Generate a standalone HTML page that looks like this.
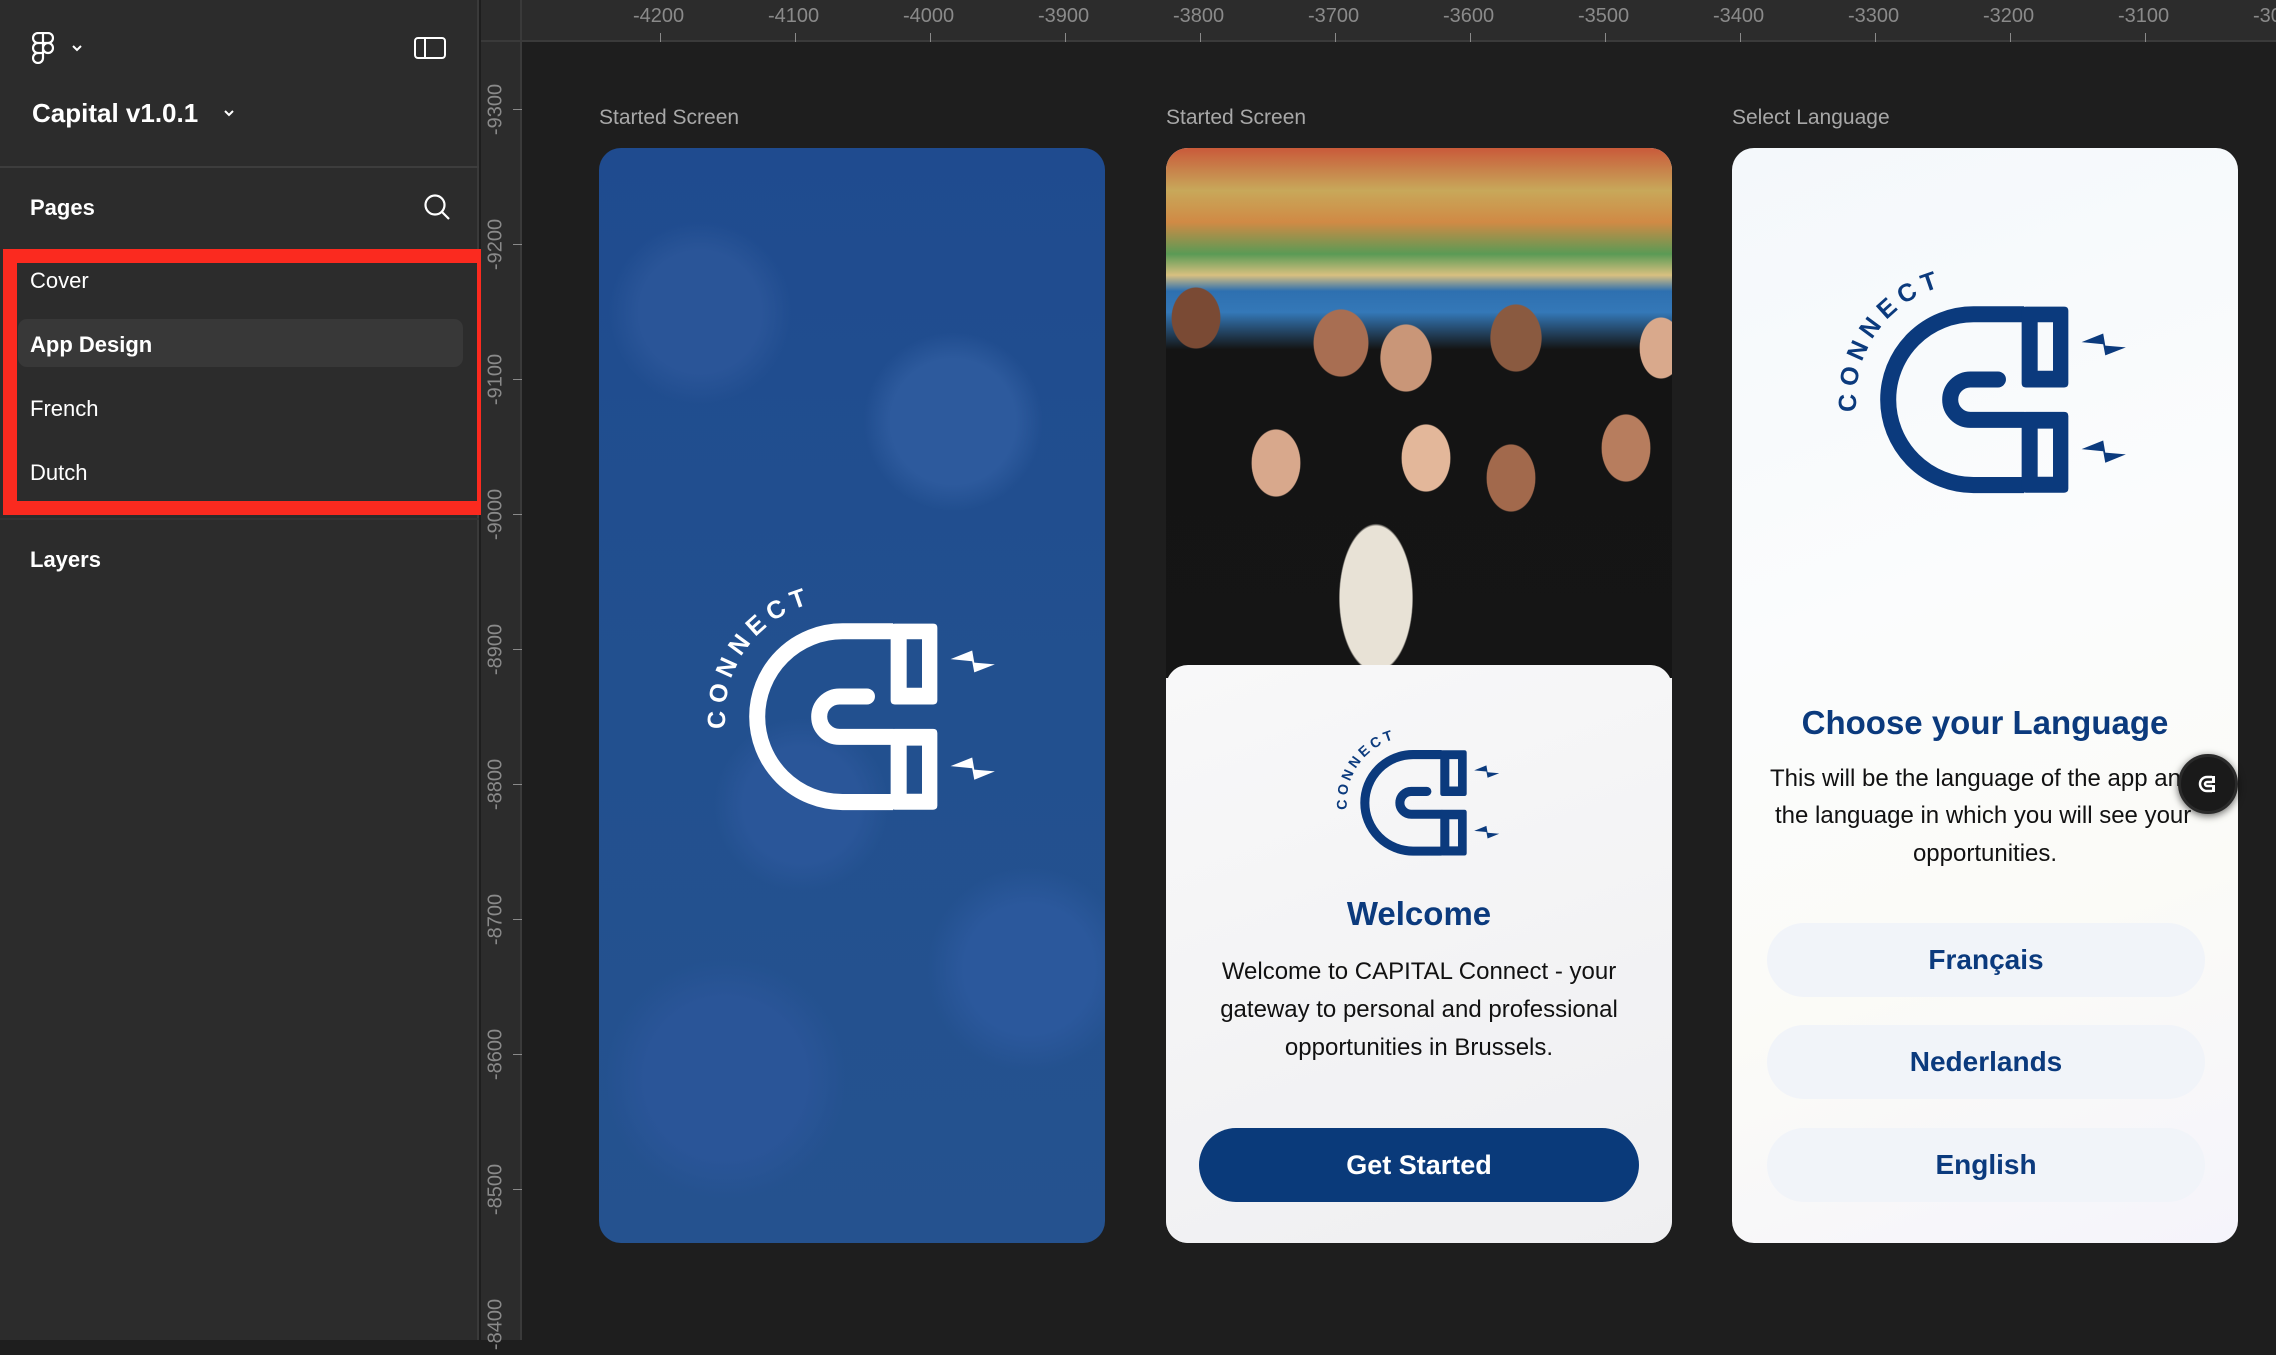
<!DOCTYPE html>
<html><head><meta charset="utf-8"><style>
*{margin:0;padding:0;box-sizing:border-box}
body{width:2276px;height:1340px;background:#1e1e1e;position:relative;overflow:hidden;font-family:"Liberation Sans",sans-serif}
.abs{position:absolute}
#side{left:0;top:0;width:479px;height:1340px;background:#2c2c2c;border-right:2px solid #3a3a3a}
.st{position:absolute;color:#fff;font-size:22px}
#topr{left:481px;top:0;right:0;height:42px;background:#2c2c2c;border-bottom:2px solid #3a3a3a}
#leftr{left:481px;top:42px;width:41px;height:1298px;background:#2c2c2c;border-right:2px solid #3a3a3a}
.rl{position:absolute;color:#8a8a8a;font-size:20px}
.tk{position:absolute;background:#8a8a8a}
.lab{position:absolute;top:106px;color:#a8a8a8;font-size:21px}
.card{position:absolute;top:148px;width:506px;height:1095px;border-radius:22px;overflow:hidden}
.nar{font-family:"Liberation Sans Narrow","Liberation Sans",sans-serif}
.btn{position:absolute;left:35px;width:438px;height:74px;border-radius:37px;background:#f1f4f9;color:#0b3a7d;font-weight:bold;font-size:28px;text-align:center;line-height:74px}
</style></head><body>
<div id="side" class="abs">
  <svg class="abs" style="left:32px;top:32px" width="22" height="32" viewBox="0 0 22 32" fill="none" stroke="#fff" stroke-width="2.2"><path d="M11 1H6a5 5 0 0 0 0 10h5zM11 1h5a5 5 0 0 1 0 10h-5zM11 11H6a5 5 0 0 0 0 10h5zM11 21H6a5 5 0 1 0 5 5zM16 11a5 5 0 1 1 0 10a5 5 0 1 1 0-10z"/></svg>
  <svg class="abs" style="left:71px;top:44px" width="12" height="8" viewBox="0 0 12 8"><path d="M2 2l4 4 4-4" stroke="#fff" stroke-width="2" fill="none"/></svg>
  <svg class="abs" style="left:414px;top:37px" width="32" height="22" viewBox="0 0 32 22"><rect x="1" y="1" width="30" height="20" rx="3" fill="none" stroke="#fff" stroke-width="2"/><line x1="11" y1="1" x2="11" y2="21" stroke="#fff" stroke-width="2"/></svg>
  <div class="st" style="left:32px;top:98px;font-size:26px;font-weight:600">Capital v1.0.1</div>
  <svg class="abs" style="left:223px;top:109px" width="12" height="8" viewBox="0 0 12 8"><path d="M2 2l4 4 4-4" stroke="#fff" stroke-width="2" fill="none"/></svg>
  <div class="abs" style="left:0;top:166px;width:479px;height:2px;background:#3d3d3d"></div>
  <div class="st" style="left:30px;top:195px;font-weight:bold">Pages</div>
  <svg class="abs" style="left:423px;top:193px" width="28" height="28" viewBox="0 0 28 28"><circle cx="12" cy="12" r="9.5" fill="none" stroke="#fff" stroke-width="2.2"/><path d="M19 19l7 7" stroke="#fff" stroke-width="2.2"/></svg>
  <div class="abs" style="left:18px;top:319px;width:445px;height:48px;background:#383838;border-radius:9px"></div>
  <div class="st" style="left:30px;top:268px">Cover</div>
  <div class="st" style="left:30px;top:332px;font-weight:bold">App Design</div>
  <div class="st" style="left:30px;top:396px">French</div>
  <div class="st" style="left:30px;top:460px">Dutch</div>
  <div class="abs" style="left:0;top:518px;width:479px;height:2px;background:#333"></div>
  <div class="st" style="left:30px;top:547px;font-weight:bold">Layers</div>
  <div class="abs" style="left:3px;top:249px;width:488px;height:266px;border:14px solid #fb2a1f"></div>
</div>
<div id="topr" class="abs"></div>
<div id="leftr" class="abs"></div>
<div class="abs" style="left:481px;top:0;width:41px;height:42px;border-right:2px solid #3a3a3a"></div>
<div class="rl" style="left:633px;top:5px">-4200</div><div class="tk" style="left:660px;top:33px;width:1px;height:9px"></div>
<div class="rl" style="left:768px;top:5px">-4100</div><div class="tk" style="left:795px;top:33px;width:1px;height:9px"></div>
<div class="rl" style="left:903px;top:5px">-4000</div><div class="tk" style="left:930px;top:33px;width:1px;height:9px"></div>
<div class="rl" style="left:1038px;top:5px">-3900</div><div class="tk" style="left:1065px;top:33px;width:1px;height:9px"></div>
<div class="rl" style="left:1173px;top:5px">-3800</div><div class="tk" style="left:1200px;top:33px;width:1px;height:9px"></div>
<div class="rl" style="left:1308px;top:5px">-3700</div><div class="tk" style="left:1335px;top:33px;width:1px;height:9px"></div>
<div class="rl" style="left:1443px;top:5px">-3600</div><div class="tk" style="left:1470px;top:33px;width:1px;height:9px"></div>
<div class="rl" style="left:1578px;top:5px">-3500</div><div class="tk" style="left:1605px;top:33px;width:1px;height:9px"></div>
<div class="rl" style="left:1713px;top:5px">-3400</div><div class="tk" style="left:1740px;top:33px;width:1px;height:9px"></div>
<div class="rl" style="left:1848px;top:5px">-3300</div><div class="tk" style="left:1875px;top:33px;width:1px;height:9px"></div>
<div class="rl" style="left:1983px;top:5px">-3200</div><div class="tk" style="left:2010px;top:33px;width:1px;height:9px"></div>
<div class="rl" style="left:2118px;top:5px">-3100</div><div class="tk" style="left:2145px;top:33px;width:1px;height:9px"></div>
<div class="rl" style="left:2253px;top:5px">-3000</div>
<div class="rl" style="left:466px;top:98px;width:60px;text-align:center;transform:rotate(-90deg)">-9300</div><div class="tk" style="left:513px;top:109px;width:9px;height:1px"></div>
<div class="rl" style="left:466px;top:233px;width:60px;text-align:center;transform:rotate(-90deg)">-9200</div><div class="tk" style="left:513px;top:244px;width:9px;height:1px"></div>
<div class="rl" style="left:466px;top:368px;width:60px;text-align:center;transform:rotate(-90deg)">-9100</div><div class="tk" style="left:513px;top:379px;width:9px;height:1px"></div>
<div class="rl" style="left:466px;top:503px;width:60px;text-align:center;transform:rotate(-90deg)">-9000</div><div class="tk" style="left:513px;top:514px;width:9px;height:1px"></div>
<div class="rl" style="left:466px;top:638px;width:60px;text-align:center;transform:rotate(-90deg)">-8900</div><div class="tk" style="left:513px;top:649px;width:9px;height:1px"></div>
<div class="rl" style="left:466px;top:773px;width:60px;text-align:center;transform:rotate(-90deg)">-8800</div><div class="tk" style="left:513px;top:784px;width:9px;height:1px"></div>
<div class="rl" style="left:466px;top:908px;width:60px;text-align:center;transform:rotate(-90deg)">-8700</div><div class="tk" style="left:513px;top:919px;width:9px;height:1px"></div>
<div class="rl" style="left:466px;top:1043px;width:60px;text-align:center;transform:rotate(-90deg)">-8600</div><div class="tk" style="left:513px;top:1054px;width:9px;height:1px"></div>
<div class="rl" style="left:466px;top:1178px;width:60px;text-align:center;transform:rotate(-90deg)">-8500</div><div class="tk" style="left:513px;top:1189px;width:9px;height:1px"></div>
<div class="rl" style="left:466px;top:1313px;width:60px;text-align:center;transform:rotate(-90deg)">-8400</div>

<div class="lab" style="left:599px">Started Screen</div>
<div class="lab" style="left:1166px">Started Screen</div>
<div class="lab" style="left:1732px">Select Language</div>

<div class="card" style="left:599px;background:radial-gradient(circle at 20% 15%,#2a5598 0 6%,transparent 9%),radial-gradient(circle at 70% 25%,#2d5a9d 0 7%,transparent 10%),radial-gradient(circle at 40% 60%,#2a5699 0 8%,transparent 12%),radial-gradient(circle at 85% 75%,#2b589c 0 7%,transparent 11%),radial-gradient(circle at 25% 85%,#2a5598 0 8%,transparent 12%),linear-gradient(#1f4b8f,#22508f 50%,#25528f)">
  <svg class="abs" style="left:104px;top:431px" width="300" height="237" viewBox="300 100 860 680">
    <g fill="#fff" stroke="#fff">
    <path d="M845 250H700A245 245 0 0 0 700 740H845" stroke-width="46" fill="none"/>
    <path d="M770 437H691A58 58 0 0 0 691 553H845" stroke-width="46" fill="none" stroke-linecap="round"/>
    <path stroke="none" fill-rule="evenodd" d="M850 228H960Q972 228 972 240V448Q972 460 960 460H850Q838 460 838 448V240Q838 228 850 228ZM884 273H928V412H884Z"/>
    <path stroke="none" fill-rule="evenodd" d="M850 530H960Q972 530 972 542V750Q972 762 960 762H850Q838 762 838 750V542Q838 530 850 530ZM884 578H928V716H884Z"/>
    <polygon stroke="none" points="1010,330 1072,305 1078,340 1137,345 1078,368 1072,336"/>
    <polygon stroke="none" points="1010,637 1072,612 1078,647 1137,652 1078,676 1072,643"/>
    </g>
    <path id="a1" d="M365 530A335 335 0 0 1 730 160" fill="none"/>
    <text font-family="Liberation Sans" font-weight="bold" font-size="72" fill="#fff" letter-spacing="18"><textPath href="#a1">CONNECT</textPath></text>
  </svg>
</div>

<div class="card" style="left:1166px;background:#f2f2f3">
  <div class="abs" style="left:0;top:0;width:506px;height:530px;background:
   radial-gradient(ellipse 40px 50px at 30px 170px,#7a4a34 60%,transparent 62%),
   radial-gradient(ellipse 45px 55px at 175px 195px,#a86e52 60%,transparent 62%),
   radial-gradient(ellipse 42px 55px at 240px 210px,#c99678 60%,transparent 62%),
   radial-gradient(ellipse 42px 55px at 350px 190px,#8a5a40 60%,transparent 62%),
   radial-gradient(ellipse 35px 50px at 495px 200px,#d9a98c 60%,transparent 62%),
   radial-gradient(ellipse 40px 55px at 110px 315px,#d8a88c 60%,transparent 62%),
   radial-gradient(ellipse 40px 55px at 260px 310px,#e3b79a 60%,transparent 62%),
   radial-gradient(ellipse 40px 55px at 345px 330px,#a2694c 60%,transparent 62%),
   radial-gradient(ellipse 40px 55px at 460px 300px,#b77d5e 60%,transparent 62%),
   radial-gradient(ellipse 60px 120px at 210px 450px,#e8e2d6 60%,transparent 62%),
   linear-gradient(180deg,#c95a3a 0,#c8a85a 8%,#d08a45 14%,#5a9a55 20%,#d8c080 24%,#2e70b0 27%,#3478b8 31%,#141414 38%,#151515 100%)"></div>
  <div class="abs" style="left:0;top:517px;width:506px;height:578px;background:linear-gradient(160deg,#f8f8f9,#efeff1);border-radius:22px 22px 0 0"></div>
  <svg class="abs" style="left:168px;top:577px" width="170" height="134" viewBox="300 100 860 680">
    <g fill="#0b3a7d" stroke="#0b3a7d">
    <path d="M845 250H700A245 245 0 0 0 700 740H845" stroke-width="46" fill="none"/>
    <path d="M770 437H691A58 58 0 0 0 691 553H845" stroke-width="46" fill="none" stroke-linecap="round"/>
    <path stroke="none" fill-rule="evenodd" d="M850 228H960Q972 228 972 240V448Q972 460 960 460H850Q838 460 838 448V240Q838 228 850 228ZM884 273H928V412H884Z"/>
    <path stroke="none" fill-rule="evenodd" d="M850 530H960Q972 530 972 542V750Q972 762 960 762H850Q838 762 838 750V542Q838 530 850 530ZM884 578H928V716H884Z"/>
    <polygon stroke="none" points="1010,330 1072,305 1078,340 1137,345 1078,368 1072,336"/>
    <polygon stroke="none" points="1010,637 1072,612 1078,647 1137,652 1078,676 1072,643"/>
    </g>
    <path id="a2" d="M365 530A335 335 0 0 1 730 160" fill="none"/>
    <text font-family="Liberation Sans" font-weight="bold" font-size="72" fill="#0b3a7d" letter-spacing="18"><textPath href="#a2">CONNECT</textPath></text>
  </svg>
  <div class="abs nar" style="left:0;width:506px;top:747px;text-align:center;color:#0b3a7d;font-weight:bold;font-size:33px">Welcome</div>
  <div class="abs nar" style="left:20px;width:466px;top:805px;text-align:center;color:#111;font-size:24px;line-height:38px">Welcome to CAPITAL Connect - your gateway to personal and professional opportunities in Brussels.</div>
  <div class="abs nar" style="left:33px;top:980px;width:440px;height:74px;border-radius:37px;background:#0a3a7a;color:#fff;font-weight:bold;font-size:27px;text-align:center;line-height:74px">Get Started</div>
</div>

<div class="card" style="left:1732px;background:linear-gradient(160deg,#f4f8fb,#fbfcfd 40%,#fbfbf7 70%,#f5f4fb)">
  <svg class="abs" style="left:102px;top:114px" width="300" height="237" viewBox="300 100 860 680">
    <g fill="#0b3a7d" stroke="#0b3a7d">
    <path d="M845 250H700A245 245 0 0 0 700 740H845" stroke-width="46" fill="none"/>
    <path d="M770 437H691A58 58 0 0 0 691 553H845" stroke-width="46" fill="none" stroke-linecap="round"/>
    <path stroke="none" fill-rule="evenodd" d="M850 228H960Q972 228 972 240V448Q972 460 960 460H850Q838 460 838 448V240Q838 228 850 228ZM884 273H928V412H884Z"/>
    <path stroke="none" fill-rule="evenodd" d="M850 530H960Q972 530 972 542V750Q972 762 960 762H850Q838 762 838 750V542Q838 530 850 530ZM884 578H928V716H884Z"/>
    <polygon stroke="none" points="1010,330 1072,305 1078,340 1137,345 1078,368 1072,336"/>
    <polygon stroke="none" points="1010,637 1072,612 1078,647 1137,652 1078,676 1072,643"/>
    </g>
    <path id="a3" d="M365 530A335 335 0 0 1 730 160" fill="none"/>
    <text font-family="Liberation Sans" font-weight="bold" font-size="72" fill="#0b3a7d" letter-spacing="18"><textPath href="#a3">CONNECT</textPath></text>
  </svg>
  <div class="abs nar" style="left:0;width:506px;top:556px;text-align:center;color:#0b3a7d;font-weight:bold;font-size:33px">Choose your Language</div>
  <div class="abs nar" style="left:38px;top:617px;white-space:nowrap;color:#111;font-size:24px">This will be the language of the app and</div>
  <div class="abs nar" style="left:43px;top:654px;white-space:nowrap;color:#111;font-size:24px">the language in which you will see your</div>
  <div class="abs nar" style="left:0;width:506px;top:692px;text-align:center;color:#111;font-size:24px">opportunities.</div>
  <div class="btn nar" style="top:775px">Français</div>
  <div class="btn nar" style="top:877px">Nederlands</div>
  <div class="btn nar" style="top:980px">English</div>
</div>
<div class="abs" style="left:2178px;top:754px;width:60px;height:60px;border-radius:50%;background:#1a1a1a;box-shadow:0 2px 8px rgba(0,0,0,.6);border:3px solid #2a2a2a"></div>
<svg class="abs" style="left:2196px;top:772px" width="24" height="24" viewBox="0 0 24 24"><path d="M16 5H11A7 7 0 0 0 11 19H16" stroke="#fff" stroke-width="2.5" fill="none"/><path d="M16 10H11A2 2 0 0 0 11 14H16" stroke="#fff" stroke-width="2.5" fill="none"/><rect x="16" y="4" width="3" height="7" fill="#fff"/><rect x="16" y="13" width="3" height="7" fill="#fff"/></svg>
</body></html>
